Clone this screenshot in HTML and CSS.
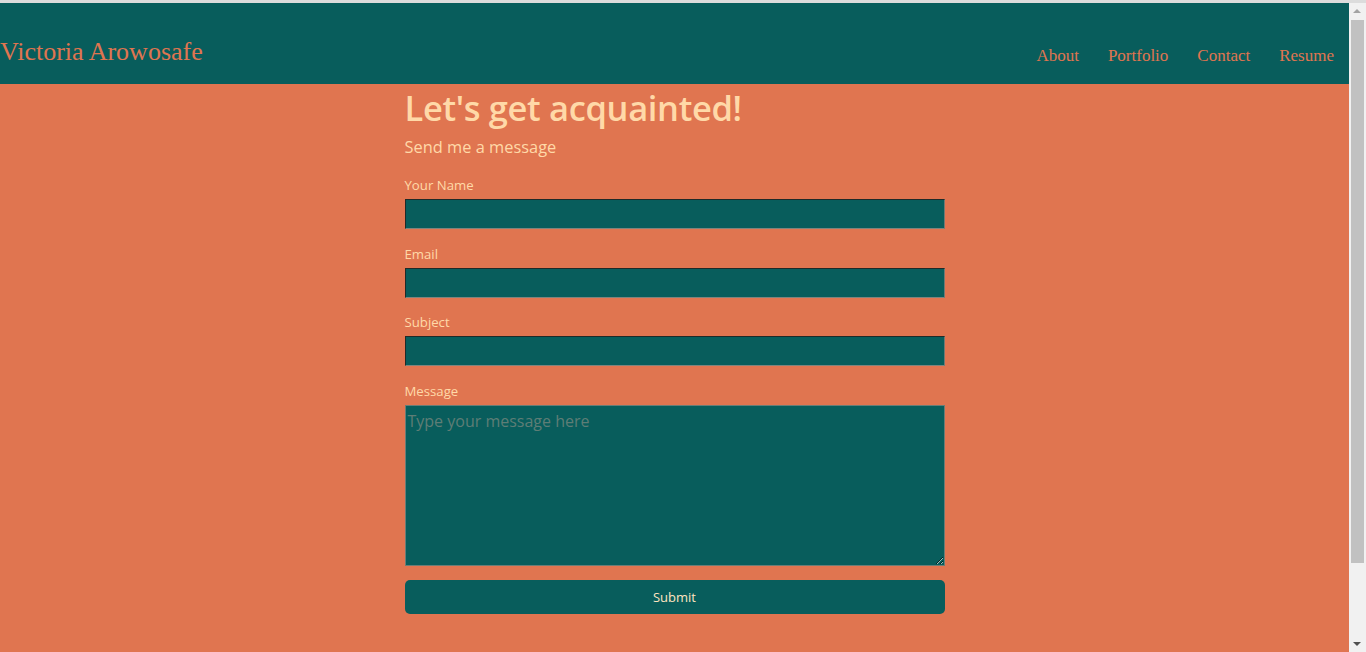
FILE: index.html
```html
<!DOCTYPE html>
<html lang="en">
<head>
<meta charset="utf-8">
<title>Contact - Victoria Arowosafe</title>
<link rel="stylesheet" href="styles.css">
</head>
<body>
<div class="topline"></div>
<div class="frame">
  <div class="page">
    <header class="site-header">
      <div class="brand">Victoria Arowosafe</div>
      <nav class="nav">
        <a href="#">About</a>
        <a href="#">Portfolio</a>
        <a href="#">Contact</a>
        <a href="#">Resume</a>
      </nav>
    </header>
    <main class="content">
      <form class="contact">
        <h1 class="title">Let's get acquainted!</h1>
        <p class="subtitle">Send me a message</p>
        <label class="field">
          <span class="label">Your Name</span>
          <input class="input" type="text">
        </label>
        <label class="field">
          <span class="label">Email</span>
          <input class="input" type="email">
        </label>
        <label class="field">
          <span class="label">Subject</span>
          <input class="input" type="text">
        </label>
        <label class="field">
          <span class="label">Message</span>
          <textarea class="textarea" placeholder="Type your message here"></textarea>
        </label>
        <button class="submit" type="button">Submit</button>
      </form>
    </main>
  </div>
  <div class="scrollbar">
    <div class="arrow arrow-up"></div>
    <div class="track"><div class="thumb"></div></div>
    <div class="arrow arrow-down"></div>
  </div>
</div>
</body>
</html>
```
FILE: styles.css
```css
html, body {
  margin: 0;
  padding: 0;
  height: 652px;
  overflow: hidden;
}
body {
  background: #e07550;
  font-family: "Open Sans", "Noto Sans", sans-serif;
}
.topline {
  height: 3px;
  background: #dcdcdc;
}
.frame {
  display: flex;
  height: 649px;
}
.page {
  flex: 1;
  display: flex;
  flex-direction: column;
  background: #e07550;
}
.site-header {
  height: 81px;
  background: #085d5c;
  display: flex;
  align-items: flex-end;
  justify-content: space-between;
  box-sizing: border-box;
  padding-bottom: 18px;
}
.brand {
  font-family: "Liberation Serif", "Times New Roman", serif;
  font-size: 26px;
  color: #e07550;
  line-height: 30px;
  margin-bottom: -1px;
}
.nav {
  display: flex;
  gap: 29px;
  padding-right: 15px;
}
.nav a {
  font-family: "Liberation Serif", "Times New Roman", serif;
  font-size: 17px;
  color: #e07550;
  text-decoration: none;
  line-height: 20px;
}
.content {
  display: flex;
  justify-content: center;
}
.contact {
  width: 540px;
  display: flex;
  flex-direction: column;
}
.title {
  margin: 2px 0 0;
  font-size: 34.5px;
  font-weight: 600;
  color: #ffd9a8;
  line-height: 44px;
  letter-spacing: -0.35px;
}
.subtitle {
  margin: 6px 0 0;
  font-size: 16.4px;
  color: #ffd9a8;
  line-height: 22px;
}
.field {
  display: flex;
  flex-direction: column;
  margin-top: 15.5px;
}
.field:first-of-type {
  margin-top: 18px;
}
.label {
  font-size: 13.2px;
  color: #ffd9a8;
  line-height: 18px;
  margin-bottom: 5px;
}
.input, .textarea {
  box-sizing: border-box;
  width: 540px;
  background: #085d5c;
  border: 1px solid;
  border-color: #1f2a28 #6f7a74 #7f847d #1f2a28;
  margin: 0;
  outline: none;
  color: #ffd9a8;
  font-family: inherit;
}
.input {
  height: 30px;
}
.textarea {
  height: 161px;
  padding: 4px 2px;
  font-size: 16px;
  border-color: #6a7d76;
  resize: vertical;
}
.textarea::placeholder {
  color: #5e7d76;
}
.submit {
  margin-top: 14px;
  height: 34px;
  border: none;
  border-radius: 5px;
  background: #085d5c;
  color: #ffe4c0;
  font-family: inherit;
  font-size: 13px;
}
.scrollbar {
  width: 17px;
  background: #f1f1f1;
  display: flex;
  flex-direction: column;
}
.arrow {
  height: 17px;
  position: relative;
}
.arrow-up::after, .arrow-down::after {
  content: "";
  position: absolute;
  left: 4px;
  border-left: 4px solid transparent;
  border-right: 4px solid transparent;
}
.arrow-up::after {
  top: 6px;
  border-bottom: 4px solid #a3a3a3;
}
.arrow-down::after {
  top: 7px;
  border-top: 4px solid #505050;
}
.track {
  flex: 1;
  padding: 0 2px;
}
.thumb {
  height: 543px;
  background: #c1c1c1;
}
```
